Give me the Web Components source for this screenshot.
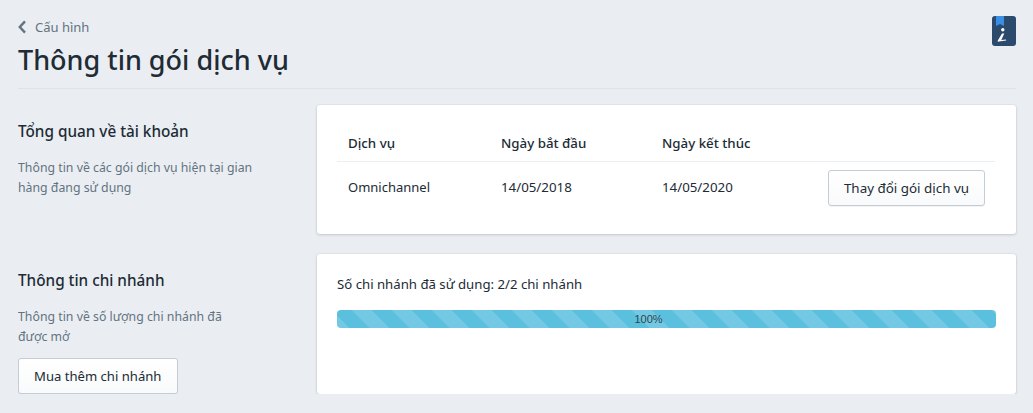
<!DOCTYPE html>
<html lang="vi">
<head>
<meta charset="utf-8">
<title>Thông tin gói dịch vụ</title>
<style>
  html,body{margin:0;padding:0;}
  body{background:#eaeef2;font-family:"Noto Sans","Open Sans",sans-serif;color:#212b35;overflow:hidden;}
</style>
</head>
<body>
<plan-page>
  <page-header slot="header" data-back="Cấu hình" data-title="Thông tin gói dịch vụ"></page-header>
  <plan-section data-title="Tổng quan về tài khoản" data-desc="Thông tin về các gói dịch vụ hiện tại gian hàng đang sử dụng" data-height="129">
    <plan-table></plan-table>
  </plan-section>
  <plan-section data-title="Thông tin chi nhánh" data-desc="Thông tin về số lượng chi nhánh đã được mở" data-height="140">
    <plain-button slot="action" style="--btn-size:13.1px;--btn-pad:16px">Mua thêm chi nhánh</plain-button>
    <branch-usage data-text="Số chi nhánh đã sử dụng: 2/2 chi nhánh" data-value="100"></branch-usage>
  </plan-section>
</plan-page>

<script>
  //outer page wrapper
  class PlanPage extends HTMLElement{
    constructor(){
      super();
      this.attachShadow({mode:"open"});
      this.shadowRoot.innerHTML = `
      <style>
      :host{display:block;padding:0 17px 0 18px;}
      .sections{display:flex;flex-direction:column;gap:20px;padding-top:16px;}
      </style>
      <slot name="header"></slot>
      <div class="sections"><slot></slot></div>
      `;
    }
  }

  //back link, title and help icon
  class PageHeader extends HTMLElement{
    constructor(){
      super();
      this.attachShadow({mode:"open"});
      this.shadowRoot.innerHTML = `
      <style>
      :host{display:flex;justify-content:space-between;height:89px;box-sizing:border-box;border-bottom:1px solid #dfe3e8;}
      .back{display:flex;align-items:center;gap:9px;height:18px;margin-top:18px;font-size:13px;color:#637381;}
      .back svg{display:block;}
      h1{margin:6px 0 0;font-size:27px;line-height:36px;font-weight:500;color:#212b35;}
      .help{margin:16px 0 0 0;display:block;}
      </style>
      <div>
        <div class="back">
          <svg width="8" height="14" viewBox="0 0 8 14"><path d="M7 1.4 1.8 7 7 12.6" fill="none" stroke="#637381" stroke-width="2.4"/></svg>
          <span id="back"></span>
        </div>
        <h1 id="title"></h1>
      </div>
      <svg class="help" width="24" height="30" viewBox="0 0 24 30">
        <rect width="24" height="30" rx="3" fill="#2c4a6b"/>
        <path d="M4 0h8v10l-4-2-4 2z" fill="#3a8ee6"/>
        <circle cx="10.8" cy="13.8" r="1.7" fill="#fff"/>
        <path d="M10 17.4 5.8 24.4c-.5 1 .3 1.4 1 1.2l7.4-1.2-.3-.8-4.6.5 3-6.7z" fill="#fff"/>
      </svg>
      `;
      this.shadowRoot.querySelector("#back").textContent = this.dataset.back;
      this.shadowRoot.querySelector("#title").textContent = this.dataset.title;
    }
  }

  //left description column + white card
  class PlanSection extends HTMLElement{
    constructor(){
      super();
      this.attachShadow({mode:"open"});
      this.shadowRoot.innerHTML = `
      <style>
      :host{display:grid;grid-template-columns:299px 1fr;}
      h2{margin:15px 0 0;font-size:15.3px;line-height:22px;font-weight:500;color:#212b35;}
      p{margin:16px 0 0;width:235px;font-size:12.3px;line-height:20px;color:#637381;}
      .action{margin-top:11px;}
      .card{box-sizing:border-box;background:#fff;border-radius:3px;box-shadow:0 0 0 1px rgba(63,63,68,.03),0 1px 3px 0 rgba(63,63,68,.2);padding:0 20px;}
      </style>
      <div>
        <h2 id="title"></h2>
        <p id="desc"></p>
        <div class="action"><slot name="action"></slot></div>
      </div>
      <div class="card" id="card"><slot></slot></div>
      `;
      this.shadowRoot.querySelector("#title").textContent = this.dataset.title;
      this.shadowRoot.querySelector("#desc").textContent = this.dataset.desc;
      this.shadowRoot.querySelector("#card").style.height = this.dataset.height + "px";
    }
  }

  class PlainButton extends HTMLElement{
    constructor(){
      super();
      this.attachShadow({mode:"open"});
      this.shadowRoot.innerHTML = `
      <style>
      :host{display:inline-block;}
      button{display:block;box-sizing:border-box;height:36px;padding:0 var(--btn-pad,15px) 0 15px;font:inherit;font-size:var(--btn-size,13.4px);color:#212b35;
        background:linear-gradient(180deg,#fff,#f9fafb);border:1px solid #c4cdd5;border-radius:3px;box-shadow:0 1px 0 0 rgba(22,29,37,.05);}
      </style>
      <button><slot></slot></button>
      `;
    }
  }

  //service table
  class PlanTable extends HTMLElement{
    constructor(){
      super();
      this.attachShadow({mode:"open"});
      this.shadowRoot.innerHTML = `
      <style>
      :host{display:block;padding-top:20px;margin-right:1px;font-size:13.3px;color:#212b35;}
      .row{display:grid;grid-template-columns:153px 161px 1fr;padding-left:11px;align-items:center;}
      .head{height:37px;border-bottom:1px solid #ebeef2;font-weight:500;box-sizing:border-box;}
      .body{height:52px;}
      .body div, .body span{margin-bottom:2px;}
      .name{font-size:13px;}
      .body div:last-child{display:flex;justify-content:space-between;align-items:center;padding-right:10px;margin-bottom:0;}
      </style>
      <div class="row head"><div>Dịch vụ</div><div>Ngày bắt đầu</div><div>Ngày kết thúc</div></div>
      <div class="row body">
        <div class="name">Omnichannel</div>
        <div>14/05/2018</div>
        <div><span>14/05/2020</span><plain-button>Thay đổi gói dịch vụ</plain-button></div>
      </div>
      `;
    }
  }

  //usage text + striped progress bar
  class BranchUsage extends HTMLElement{
    constructor(){
      super();
      this.attachShadow({mode:"open"});
      this.shadowRoot.innerHTML = `
      <style>
      :host{display:block;padding-top:20px;font-size:13.2px;color:#212b35;}
      .text{line-height:20px;}
      .bar{box-sizing:border-box;margin-top:16px;height:18px;padding-right:36px;border-radius:4px;background-color:#5bc0de;
        background-image:linear-gradient(45deg,rgba(255,255,255,.15) 25%,transparent 25%,transparent 50%,rgba(255,255,255,.15) 50%,rgba(255,255,255,.15) 75%,transparent 75%,transparent);
        background-size:40px 40px;background-position:15px 0;text-align:center;font-family:"Liberation Sans",sans-serif;font-size:11px;line-height:18px;color:#2f4450;}
      </style>
      <div class="text" id="text"></div>
      <div class="bar" id="bar"></div>
      `;
      this.shadowRoot.querySelector("#text").textContent = this.dataset.text;
      this.shadowRoot.querySelector("#bar").textContent = this.dataset.value + "%";
    }
  }

  customElements.define("plan-page", PlanPage);
  customElements.define("page-header", PageHeader);
  customElements.define("plan-section", PlanSection);
  customElements.define("plain-button", PlainButton);
  customElements.define("plan-table", PlanTable);
  customElements.define("branch-usage", BranchUsage);
</script>
</body>
</html>
